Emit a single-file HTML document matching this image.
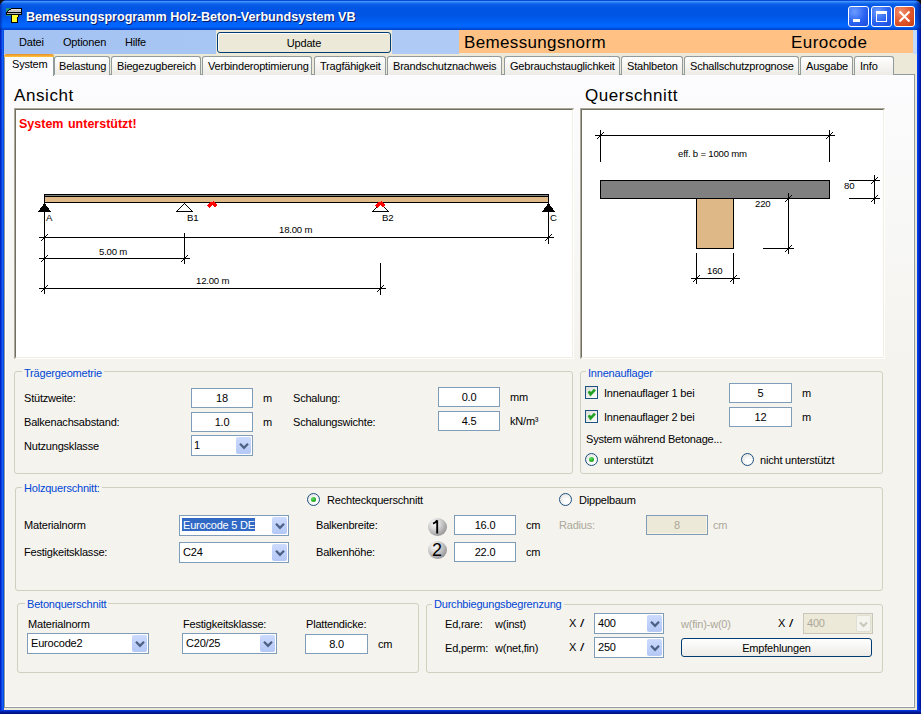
<!DOCTYPE html>
<html><head><meta charset="utf-8">
<style>
*{margin:0;padding:0;box-sizing:border-box}
html,body{width:921px;height:714px;overflow:hidden;background:#111}
body{position:relative;font-family:"Liberation Sans",sans-serif;font-size:11px;color:#000}
.a{position:absolute}
.t{position:absolute;line-height:11px;font-size:11px;white-space:nowrap;letter-spacing:-0.2px}
.grp{position:absolute;border:1px solid #D0D0BF;border-radius:3px}
.gt{position:absolute;line-height:11px;font-size:11px;white-space:nowrap;color:#0046D5;padding:0 2px;letter-spacing:-0.2px;background:#F4F3EE}
.tb{position:absolute;border:1px solid #7F9DB9;background:#fff;text-align:center;line-height:11px;font-size:11px;letter-spacing:-0.2px}
.cb{position:absolute;border:1px solid #7F9DB9;background:#fff}
.cbb{position:absolute;right:1px;top:1px;bottom:1px;width:15px;border-radius:2px;background:linear-gradient(#CCDAFD,#B4C8F6)}
.cbb svg{position:absolute;left:2.5px;top:5px}
.chk{position:absolute;width:13px;height:13px;border:1px solid #1C5180;background:linear-gradient(135deg,#DCDCD7,#fff)}
.rad{position:absolute;width:13px;height:13px;border-radius:50%;border:1px solid #1C5180;background:radial-gradient(circle at 60% 65%,#fff 20%,#DCDCD7 100%)}
.tab{position:absolute;top:56px;height:19px;border:1px solid #919B9C;border-bottom:none;border-radius:3px 3px 0 0;background:linear-gradient(#fff,#ECEBE6);line-height:11px;font-size:11px;letter-spacing:-0.2px;padding-top:4px;white-space:nowrap}
</style></head><body>
<div class="a" style="left:0;top:0;width:921px;height:714px;background:#0831d9;border-radius:7px 7px 0 0;overflow:hidden">
  <div class="a" style="left:0;top:0;width:921px;height:30px;background:linear-gradient(#0A48D8 0,#0A48D8 1px,#3D95FF 1px,#3D95FF 2px,#2A7CF5 2.5px,#0A60E8 4px,#0056E4 8px,#0054E3 15px,#005CF0 20px,#0066FF 25px,#0064FA 27px,#0050E0 28.5px,#0040C8 30px)"></div>
  <div class="a" style="left:0;top:0;width:3px;height:30px;background:linear-gradient(90deg,rgba(0,10,120,0.55),rgba(0,20,150,0.25) 50%,rgba(0,0,0,0))"></div>
  <div class="a" style="left:914px;top:0;width:7px;height:30px;background:linear-gradient(90deg,rgba(0,0,0,0),rgba(0,20,140,0.35) 50%,rgba(0,10,100,0.7))"></div>
  <div class="a" style="left:0;top:30px;width:4px;height:684px;background:linear-gradient(90deg,#0019B0,#0030D8 30%,#1464F4 60%,#0040E0)"></div>
  <div class="a" style="left:917px;top:30px;width:4px;height:684px;background:linear-gradient(90deg,#0046FF,#0030D0 40%,#001090)"></div>
  <div class="a" style="left:0;top:710px;width:921px;height:4px;background:linear-gradient(#0040F0,#001A9A 50%,#000E80)"></div>
</div>
<svg class="a" style="left:0;top:0" width="30" height="30" shape-rendering="crispEdges">
  <rect x="6" y="8" width="5" height="8" fill="#1E9080"/>
  <polygon points="11,8 22,8 22,15 6,15 6,12 7,12 7,11 8,11 8,10 9,10 9,9 11,9" fill="#000"/>
  <polygon points="11,9 21,9 21,12 8,12 8,11 9,11 9,10 11,10" fill="#C8C8C8"/>
  <rect x="11" y="9" width="10" height="1" fill="#E0E0E0"/>
  <rect x="7" y="13" width="14" height="1" fill="#B4B4B4"/>
  <rect x="11" y="15" width="8" height="2" fill="#000"/>
  <rect x="11" y="17" width="7" height="6" fill="#000"/>
  <rect x="12" y="15" width="6" height="2" fill="#FFFF30"/>
  <rect x="12" y="17" width="5" height="5" fill="#FFFF30"/>
</svg>
<div class="a" style="left:27px;top:12px;font-size:12.6px;font-weight:bold;color:#0a1a6a;line-height:13px;white-space:nowrap">Bemessungsprogramm Holz-Beton-Verbundsystem VB</div>
<div class="a" style="left:26px;top:11px;font-size:12.6px;font-weight:bold;color:#fff;line-height:13px;white-space:nowrap">Bemessungsprogramm Holz-Beton-Verbundsystem VB</div>
<div class="a" style="left:848px;top:6px;width:21px;height:21px;border:1px solid #fff;border-radius:3px;background:radial-gradient(circle at 30% 25%,#6c9cff,#2a63f2 55%,#1a4ad8)"></div>
<div class="a" style="left:853px;top:19px;width:7px;height:3px;background:#fff"></div>
<div class="a" style="left:871px;top:6px;width:21px;height:21px;border:1px solid #fff;border-radius:3px;background:radial-gradient(circle at 30% 25%,#6c9cff,#2a63f2 55%,#1a4ad8)"></div>
<div class="a" style="left:876px;top:11px;width:11px;height:11px;border:1px solid #fff;border-top-width:3px"></div>
<div class="a" style="left:894px;top:6px;width:21px;height:21px;border:1px solid #fff;border-radius:3px;background:radial-gradient(circle at 30% 25%,#f09070,#e0542a 55%,#c83c10)"></div>
<svg class="a" style="left:894px;top:6px" width="21" height="21"><path d="M5.5 5.5 L15.5 15.5 M15.5 5.5 L5.5 15.5" stroke="#fff" stroke-width="2"/></svg>
<div class="a" style="left:4px;top:30px;width:913px;height:680px;background:#ECE9D8"></div>
<div class="a" style="left:4px;top:30px;width:212px;height:24px;background:linear-gradient(90deg,#A4C2F2,#A8C6F3)"></div>
<div class="a" style="left:392px;top:30px;width:67px;height:24px;background:#AFCAF5"></div>
<div class="a" style="left:913px;top:30px;width:4px;height:24px;background:#C4DAFA"></div>
<div class="t" style="left:19px;top:37px;">Datei</div>
<div class="t" style="left:63px;top:37px;">Optionen</div>
<div class="t" style="left:125px;top:37px;">Hilfe</div>
<div class="a" style="left:217px;top:32px;width:174px;height:21px;border:1px solid #003C74;border-radius:3px;background:#ECE9D8;box-shadow:inset 1px 1px 0 #fff"></div>
<div class="t" style="left:217px;top:38px;width:174px;text-align:center">Update</div>
<div class="a" style="left:459px;top:30px;width:454px;height:23px;background:#FFC284"></div>
<div class="a" style="left:464px;top:34px;font-size:17px;line-height:17px;white-space:nowrap;letter-spacing:0.35px">Bemessungsnorm</div>
<div class="a" style="left:791px;top:34px;font-size:17px;line-height:17px;white-space:nowrap;letter-spacing:0.45px">Eurocode</div>
<div class="a" style="left:4px;top:74px;width:911px;height:634px;border:1px solid #919B9C;background:linear-gradient(#FCFCFE 0,#F8F8F7 140px,#F4F3EE 290px,#F4F3EE 100%)"></div>
<div class="a" style="left:5px;top:75px;width:1px;height:632px;background:#fff"></div>
<div class="a" style="left:913px;top:75px;width:1px;height:632px;background:#fff"></div>
<div class="a" style="left:5px;top:706px;width:909px;height:1px;background:#fff"></div>
<div class="tab" style="left:54px;width:56px;padding-left:4px">Belastung</div>
<div class="tab" style="left:111px;width:90px;padding-left:5px">Biegezugbereich</div>
<div class="tab" style="left:202px;width:110px;padding-left:5px">Verbinderoptimierung</div>
<div class="tab" style="left:314px;width:72px;padding-left:5px">Tragfähigkeit</div>
<div class="tab" style="left:387px;width:115px;padding-left:5px">Brandschutznachweis</div>
<div class="tab" style="left:504px;width:116px;padding-left:5px">Gebrauchstauglichkeit</div>
<div class="tab" style="left:621px;width:62px;padding-left:5px">Stahlbeton</div>
<div class="tab" style="left:684px;width:115px;padding-left:5px">Schallschutzprognose</div>
<div class="tab" style="left:800px;width:53px;padding-left:5px">Ausgabe</div>
<div class="tab" style="left:854px;width:40px;padding-left:5px">Info</div>
<div class="a" style="left:4px;top:54px;width:50px;height:22px;border:1px solid #919B9C;border-top:none;border-bottom:none;background:#FCFCFE;border-radius:3px 3px 0 0"></div>
<div class="a" style="left:5px;top:57px;width:1px;height:18px;background:#fff"></div>
<div class="a" style="left:4px;top:54px;width:50px;height:3px;background:linear-gradient(#E68B2C,#FFC73C);border-radius:3px 3px 0 0"></div>
<div class="t" style="left:12px;top:59px;">System</div>
<div class="a" style="left:14px;top:87px;font-size:17px;line-height:17px;white-space:nowrap;letter-spacing:0.6px">Ansicht</div>
<div class="a" style="left:585px;top:87px;font-size:17px;line-height:17px;white-space:nowrap;letter-spacing:0.55px">Querschnitt</div>
<div class="a" style="left:14px;top:108px;width:560px;height:251px;background:#fff;border-top:2px solid #ACA899;border-left:2px solid #ACA899;border-right:1px solid #fff;border-bottom:1px solid #fff"></div>
<div class="a" style="left:15px;top:109px;width:558px;height:249px;border-top:1px solid #716F64;border-left:1px solid #716F64;border-right:1px solid #F1EFE2;border-bottom:1px solid #F1EFE2"></div>
<div class="a" style="left:580px;top:108px;width:305px;height:251px;background:#fff;border-top:2px solid #ACA899;border-left:2px solid #ACA899;border-right:1px solid #fff;border-bottom:1px solid #fff"></div>
<div class="a" style="left:581px;top:109px;width:303px;height:249px;border-top:1px solid #716F64;border-left:1px solid #716F64;border-right:1px solid #F1EFE2;border-bottom:1px solid #F1EFE2"></div>
<div class="a" style="left:19px;top:118px;font-size:12.5px;font-weight:bold;color:#FF0000;line-height:12px;white-space:nowrap;word-spacing:1px">System unterstützt!</div>
<div class="grp" style="left:14px;top:371px;width:559px;height:103px"></div>
<div class="gt" style="left:22px;top:368px">Trägergeometrie</div>
<div class="t" style="left:24px;top:393px;">Stützweite:</div>
<div class="t" style="left:24px;top:417px;">Balkenachsabstand:</div>
<div class="t" style="left:24px;top:441px;">Nutzungsklasse</div>
<div class="tb" style="left:191px;top:388px;width:62px;height:20px;padding-top:4px;">18</div>
<div class="tb" style="left:191px;top:412px;width:62px;height:20px;padding-top:4px;">1.0</div>
<div class="cb" style="left:191px;top:435px;width:62px;height:21px"><div class="cbb"><svg width="11" height="8" viewBox="0 0 11 8"><path d="M1 1.8 L5 5.8 L9 1.8" fill="none" stroke="#4D6185" stroke-width="2.3"/></svg></div></div>
<div class="t" style="left:194px;top:440px;">1</div>
<div class="t" style="left:263px;top:393px;">m</div>
<div class="t" style="left:263px;top:417px;">m</div>
<div class="t" style="left:293px;top:393px;">Schalung:</div>
<div class="t" style="left:293px;top:417px;">Schalungswichte:</div>
<div class="tb" style="left:438px;top:387px;width:62px;height:20px;padding-top:4px;">0.0</div>
<div class="tb" style="left:438px;top:411px;width:62px;height:20px;padding-top:4px;">4.5</div>
<div class="t" style="left:510px;top:392px;">mm</div>
<div class="t" style="left:510px;top:416px;">kN/m³</div>
<div class="grp" style="left:580px;top:371px;width:303px;height:103px"></div>
<div class="gt" style="left:586px;top:368px">Innenauflager</div>
<div class="chk" style="left:585px;top:386px"><svg class="a" style="left:1px;top:1px" width="11" height="11" viewBox="0 0 11 11"><path d="M1.8 3.3 L3.6 6.3 L7.9 1.7" fill="none" stroke="#21A121" stroke-width="2.7"/></svg></div>
<div class="chk" style="left:585px;top:410px"><svg class="a" style="left:1px;top:1px" width="11" height="11" viewBox="0 0 11 11"><path d="M1.8 3.3 L3.6 6.3 L7.9 1.7" fill="none" stroke="#21A121" stroke-width="2.7"/></svg></div>
<div class="t" style="left:604px;top:388px;">Innenauflager 1 bei</div>
<div class="t" style="left:604px;top:412px;">Innenauflager 2 bei</div>
<div class="tb" style="left:729px;top:383px;width:63px;height:20px;padding-top:4px;">5</div>
<div class="tb" style="left:729px;top:407px;width:63px;height:20px;padding-top:4px;">12</div>
<div class="t" style="left:802px;top:388px;">m</div>
<div class="t" style="left:802px;top:412px;">m</div>
<div class="t" style="left:586px;top:434px;">System während Betonage...</div>
<div class="rad" style="left:585px;top:453px"><div class="a" style="left:3px;top:3px;width:5px;height:5px;border-radius:50%;background:radial-gradient(circle at 35% 30%,#5AE05A,#139A13 80%)"></div></div>
<div class="t" style="left:604px;top:455px;">unterstützt</div>
<div class="rad" style="left:741px;top:453px"></div>
<div class="t" style="left:760px;top:455px;">nicht unterstützt</div>
<div class="grp" style="left:15px;top:487px;width:868px;height:104px"></div>
<div class="gt" style="left:22px;top:483px">Holzquerschnitt:</div>
<div class="t" style="left:24px;top:520px;">Materialnorm</div>
<div class="t" style="left:24px;top:547px;">Festigkeitsklasse:</div>
<div class="cb" style="left:179px;top:515px;width:110px;height:21px"><div class="cbb"><svg width="11" height="8" viewBox="0 0 11 8"><path d="M1 1.8 L5 5.8 L9 1.8" fill="none" stroke="#4D6185" stroke-width="2.3"/></svg></div></div>
<div class="a" style="left:182px;top:518px;width:73px;height:13px;background:#316AC5"></div>
<div class="t" style="left:183px;top:520px;color:#fff">Eurocode 5 DE</div>
<div class="cb" style="left:179px;top:542px;width:110px;height:21px"><div class="cbb"><svg width="11" height="8" viewBox="0 0 11 8"><path d="M1 1.8 L5 5.8 L9 1.8" fill="none" stroke="#4D6185" stroke-width="2.3"/></svg></div></div>
<div class="t" style="left:183px;top:547px;">C24</div>
<div class="rad" style="left:307px;top:493px"><div class="a" style="left:3px;top:3px;width:5px;height:5px;border-radius:50%;background:radial-gradient(circle at 35% 30%,#5AE05A,#139A13 80%)"></div></div>
<div class="t" style="left:327px;top:495px;">Rechteckquerschnitt</div>
<div class="rad" style="left:559px;top:493px"></div>
<div class="t" style="left:579px;top:495px;">Dippelbaum</div>
<div class="t" style="left:316px;top:520px;">Balkenbreite:</div>
<div class="t" style="left:316px;top:547px;">Balkenhöhe:</div>
<div class="tb" style="left:454px;top:515px;width:62px;height:20px;padding-top:4px;">16.0</div>
<div class="tb" style="left:454px;top:542px;width:62px;height:20px;padding-top:4px;">22.0</div>
<div class="t" style="left:526px;top:520px;">cm</div>
<div class="t" style="left:526px;top:547px;">cm</div>
<div class="t" style="left:559px;top:520px;color:#ACA899">Radius:</div>
<div class="tb" style="left:646px;top:515px;width:62px;height:20px;padding-top:4px;background:#ECE9D8;color:#ACA899;border-color:#7F9DB9;box-shadow:inset -1px -1px 0 #F8F4E4">8</div>
<div class="t" style="left:713px;top:520px;color:#ACA899">cm</div>
<div class="a" style="left:428px;top:518px;width:19px;height:18px;border-radius:50%;background:radial-gradient(circle at 35% 30%,#FCFCFC 0,#DADADA 30%,#A0A0A0 70%,#5E5E5E 100%)"></div>
<svg class="a" style="left:428px;top:518px" width="19" height="18"><path d="M9.2 2.2 L9.2 15.5 M5 5.6 Q8 4.5 9.2 2.2" fill="none" stroke="#000" stroke-width="1.9"/></svg>
<div class="a" style="left:428px;top:541px;width:19px;height:18px;border-radius:50%;background:radial-gradient(circle at 35% 30%,#FCFCFC 0,#DADADA 30%,#A0A0A0 70%,#5E5E5E 100%)"></div>
<div class="a" style="left:428px;top:541px;width:18px;text-align:center;font-size:18px;line-height:18px">2</div>
<div class="grp" style="left:17px;top:603px;width:402px;height:70px"></div>
<div class="gt" style="left:25px;top:599px">Betonquerschnitt</div>
<div class="t" style="left:28px;top:619px;">Materialnorm</div>
<div class="t" style="left:183px;top:619px;">Festigkeitsklasse:</div>
<div class="t" style="left:306px;top:619px;">Plattendicke:</div>
<div class="cb" style="left:27px;top:633px;width:122px;height:21px"><div class="cbb"><svg width="11" height="8" viewBox="0 0 11 8"><path d="M1 1.8 L5 5.8 L9 1.8" fill="none" stroke="#4D6185" stroke-width="2.3"/></svg></div></div>
<div class="t" style="left:31px;top:638px;">Eurocode2</div>
<div class="cb" style="left:182px;top:633px;width:95px;height:21px"><div class="cbb"><svg width="11" height="8" viewBox="0 0 11 8"><path d="M1 1.8 L5 5.8 L9 1.8" fill="none" stroke="#4D6185" stroke-width="2.3"/></svg></div></div>
<div class="t" style="left:186px;top:638px;">C20/25</div>
<div class="tb" style="left:305px;top:634px;width:63px;height:20px;padding-top:4px;">8.0</div>
<div class="t" style="left:378px;top:639px;">cm</div>
<div class="grp" style="left:426px;top:604px;width:457px;height:69px"></div>
<div class="gt" style="left:432px;top:599px">Durchbiegungsbegrenzung</div>
<div class="t" style="left:445px;top:619px;">Ed,rare:</div>
<div class="t" style="left:495px;top:619px;">w(inst)</div>
<div class="t" style="left:569px;top:618px;">X</div>
<div class="t" style="left:580px;top:618px;transform:scaleX(1.4);transform-origin:0 0">/</div>
<div class="t" style="left:445px;top:643px;">Ed,perm:</div>
<div class="t" style="left:495px;top:643px;">w(net,fin)</div>
<div class="t" style="left:569px;top:642px;">X</div>
<div class="t" style="left:580px;top:642px;transform:scaleX(1.4);transform-origin:0 0">/</div>
<div class="cb" style="left:594px;top:613px;width:70px;height:21px"><div class="cbb"><svg width="11" height="8" viewBox="0 0 11 8"><path d="M1 1.8 L5 5.8 L9 1.8" fill="none" stroke="#4D6185" stroke-width="2.3"/></svg></div></div>
<div class="t" style="left:598px;top:618px;">400</div>
<div class="cb" style="left:594px;top:637px;width:70px;height:21px"><div class="cbb"><svg width="11" height="8" viewBox="0 0 11 8"><path d="M1 1.8 L5 5.8 L9 1.8" fill="none" stroke="#4D6185" stroke-width="2.3"/></svg></div></div>
<div class="t" style="left:598px;top:642px;">250</div>
<div class="t" style="left:681px;top:619px;color:#ACA899">w(fin)-w(0)</div>
<div class="t" style="left:778px;top:618px;">X</div>
<div class="t" style="left:789px;top:618px;transform:scaleX(1.4);transform-origin:0 0">/</div>
<div class="a" style="left:803px;top:613px;width:70px;height:21px;border:1px solid #C9C7BA;background:#ECE9D8"><div class="a" style="right:1px;top:1px;bottom:1px;width:15px;border-radius:2px;background:#F4F3EE;border:1px solid #E0DFD6"><svg class="a" style="left:2px;top:5px" width="9" height="7" viewBox="0 0 9 7"><path d="M1 1.5 L4.5 5 L8 1.5" fill="none" stroke="#C9C7BA" stroke-width="2"/></svg></div></div>
<div class="t" style="left:807px;top:618px;color:#ACA899">400</div>
<div class="a" style="left:681px;top:638px;width:191px;height:19px;border:1px solid #003C74;border-radius:3px;background:linear-gradient(#fff,#ECEBE6)"></div>
<div class="t" style="left:681px;top:643px;width:191px;text-align:center">Empfehlungen</div>
<svg class="a" style="left:0;top:0" width="921" height="714" shape-rendering="crispEdges"><rect x="44" y="194" width="505" height="9" fill="#DEB887"/><rect x="44" y="194" width="505" height="1" fill="#000"/><rect x="45" y="195" width="503" height="1" fill="#808080"/><rect x="44" y="196" width="505" height="1" fill="#000"/><rect x="44" y="202" width="505" height="1" fill="#000"/><rect x="44" y="194" width="1" height="9" fill="#000"/><rect x="548" y="194" width="1" height="9" fill="#000"/><polygon points="44.5,203 51,211.8 38,211.8" fill="#000"/><polygon points="548.5,203 555,211.8 542,211.8" fill="#000"/><polygon points="184.5,203.5 192.5,211.5 176.5,211.5" fill="none" stroke="#000" stroke-width="1"/><polygon points="380.5,203.5 388.5,211.5 372.5,211.5" fill="none" stroke="#000" stroke-width="1"/><rect x="44" y="212" width="1" height="82" fill="#000"/><rect x="548" y="212" width="1" height="32" fill="#000"/><rect x="184" y="233" width="1" height="31" fill="#000"/><rect x="380" y="263" width="1" height="32" fill="#000"/><rect x="39" y="237" width="515" height="1" fill="#000"/><rect x="39" y="258" width="151" height="1" fill="#000"/><rect x="39" y="288" width="347" height="1" fill="#000"/><rect x="41" y="240" width="1" height="1" fill="#000"/><rect x="42" y="239" width="1" height="1" fill="#000"/><rect x="43" y="238" width="1" height="1" fill="#000"/><rect x="44" y="237" width="1" height="1" fill="#000"/><rect x="45" y="236" width="1" height="1" fill="#000"/><rect x="46" y="235" width="1" height="1" fill="#000"/><rect x="47" y="234" width="1" height="1" fill="#000"/><rect x="545" y="240" width="1" height="1" fill="#000"/><rect x="546" y="239" width="1" height="1" fill="#000"/><rect x="547" y="238" width="1" height="1" fill="#000"/><rect x="548" y="237" width="1" height="1" fill="#000"/><rect x="549" y="236" width="1" height="1" fill="#000"/><rect x="550" y="235" width="1" height="1" fill="#000"/><rect x="551" y="234" width="1" height="1" fill="#000"/><rect x="41" y="261" width="1" height="1" fill="#000"/><rect x="42" y="260" width="1" height="1" fill="#000"/><rect x="43" y="259" width="1" height="1" fill="#000"/><rect x="44" y="258" width="1" height="1" fill="#000"/><rect x="45" y="257" width="1" height="1" fill="#000"/><rect x="46" y="256" width="1" height="1" fill="#000"/><rect x="47" y="255" width="1" height="1" fill="#000"/><rect x="181" y="261" width="1" height="1" fill="#000"/><rect x="182" y="260" width="1" height="1" fill="#000"/><rect x="183" y="259" width="1" height="1" fill="#000"/><rect x="184" y="258" width="1" height="1" fill="#000"/><rect x="185" y="257" width="1" height="1" fill="#000"/><rect x="186" y="256" width="1" height="1" fill="#000"/><rect x="187" y="255" width="1" height="1" fill="#000"/><rect x="41" y="291" width="1" height="1" fill="#000"/><rect x="42" y="290" width="1" height="1" fill="#000"/><rect x="43" y="289" width="1" height="1" fill="#000"/><rect x="44" y="288" width="1" height="1" fill="#000"/><rect x="45" y="287" width="1" height="1" fill="#000"/><rect x="46" y="286" width="1" height="1" fill="#000"/><rect x="47" y="285" width="1" height="1" fill="#000"/><rect x="377" y="291" width="1" height="1" fill="#000"/><rect x="378" y="290" width="1" height="1" fill="#000"/><rect x="379" y="289" width="1" height="1" fill="#000"/><rect x="380" y="288" width="1" height="1" fill="#000"/><rect x="381" y="287" width="1" height="1" fill="#000"/><rect x="382" y="286" width="1" height="1" fill="#000"/><rect x="383" y="285" width="1" height="1" fill="#000"/><text x="46" y="221" font-family="Liberation Sans" font-size="9.6" letter-spacing="-0.2">A</text><text x="187" y="221" font-family="Liberation Sans" font-size="9.6" letter-spacing="-0.2">B1</text><text x="382" y="221" font-family="Liberation Sans" font-size="9.6" letter-spacing="-0.2">B2</text><text x="550" y="221" font-family="Liberation Sans" font-size="9.6" letter-spacing="-0.2">C</text><text x="279" y="233" font-family="Liberation Sans" font-size="9.6" letter-spacing="-0.2">18.00 m</text><text x="99" y="255" font-family="Liberation Sans" font-size="9.6" letter-spacing="-0.2">5.00 m</text><text x="196" y="284" font-family="Liberation Sans" font-size="9.6" letter-spacing="-0.2">12.00 m</text><rect x="213" y="201" width="1" height="1" fill="#FF0000"/><rect x="210" y="202" width="5" height="1" fill="#FF0000"/><rect x="209" y="203" width="7" height="1" fill="#FF0000"/><rect x="208" y="204" width="9" height="1" fill="#FF0000"/><rect x="207" y="205" width="5" height="1" fill="#FF0000"/><rect x="213" y="205" width="4" height="1" fill="#FF0000"/><rect x="208" y="206" width="3" height="1" fill="#FF0000"/><rect x="214" y="206" width="2" height="1" fill="#FF0000"/><rect x="209" y="207" width="1" height="1" fill="#FF0000"/><rect x="381" y="201" width="1" height="1" fill="#FF0000"/><rect x="378" y="202" width="5" height="1" fill="#FF0000"/><rect x="377" y="203" width="7" height="1" fill="#FF0000"/><rect x="376" y="204" width="9" height="1" fill="#FF0000"/><rect x="375" y="205" width="5" height="1" fill="#FF0000"/><rect x="381" y="205" width="4" height="1" fill="#FF0000"/><rect x="376" y="206" width="3" height="1" fill="#FF0000"/><rect x="382" y="206" width="2" height="1" fill="#FF0000"/><rect x="377" y="207" width="1" height="1" fill="#FF0000"/><rect x="595" y="135" width="240" height="1" fill="#000"/><rect x="600" y="130" width="1" height="32" fill="#000"/><rect x="829" y="130" width="1" height="32" fill="#000"/><rect x="597" y="138" width="1" height="1" fill="#000"/><rect x="598" y="137" width="1" height="1" fill="#000"/><rect x="599" y="136" width="1" height="1" fill="#000"/><rect x="600" y="135" width="1" height="1" fill="#000"/><rect x="601" y="134" width="1" height="1" fill="#000"/><rect x="602" y="133" width="1" height="1" fill="#000"/><rect x="603" y="132" width="1" height="1" fill="#000"/><rect x="826" y="138" width="1" height="1" fill="#000"/><rect x="827" y="137" width="1" height="1" fill="#000"/><rect x="828" y="136" width="1" height="1" fill="#000"/><rect x="829" y="135" width="1" height="1" fill="#000"/><rect x="830" y="134" width="1" height="1" fill="#000"/><rect x="831" y="133" width="1" height="1" fill="#000"/><rect x="832" y="132" width="1" height="1" fill="#000"/><text x="678" y="157" font-family="Liberation Sans" font-size="9.6" letter-spacing="-0.2">eff. b = 1000 mm</text><rect x="600" y="180" width="230" height="19" fill="#808080"/><rect x="600" y="180" width="230" height="1" fill="#000"/><rect x="600" y="198" width="230" height="1" fill="#000"/><rect x="600" y="180" width="1" height="19" fill="#000"/><rect x="829" y="180" width="1" height="19" fill="#000"/><rect x="696" y="199" width="38" height="50" fill="#DEB887"/><rect x="696" y="248" width="38" height="1" fill="#000"/><rect x="696" y="198" width="1" height="51" fill="#000"/><rect x="733" y="198" width="1" height="51" fill="#000"/><rect x="696" y="253" width="1" height="31" fill="#000"/><rect x="733" y="253" width="1" height="31" fill="#000"/><rect x="691" y="278" width="49" height="1" fill="#000"/><rect x="693" y="281" width="1" height="1" fill="#000"/><rect x="694" y="280" width="1" height="1" fill="#000"/><rect x="695" y="279" width="1" height="1" fill="#000"/><rect x="696" y="278" width="1" height="1" fill="#000"/><rect x="697" y="277" width="1" height="1" fill="#000"/><rect x="698" y="276" width="1" height="1" fill="#000"/><rect x="699" y="275" width="1" height="1" fill="#000"/><rect x="730" y="281" width="1" height="1" fill="#000"/><rect x="731" y="280" width="1" height="1" fill="#000"/><rect x="732" y="279" width="1" height="1" fill="#000"/><rect x="733" y="278" width="1" height="1" fill="#000"/><rect x="734" y="277" width="1" height="1" fill="#000"/><rect x="735" y="276" width="1" height="1" fill="#000"/><rect x="736" y="275" width="1" height="1" fill="#000"/><text x="707" y="274" font-family="Liberation Sans" font-size="9.6" letter-spacing="-0.2">160</text><rect x="788" y="193" width="1" height="61" fill="#000"/><rect x="763" y="248" width="31" height="1" fill="#000"/><rect x="785" y="201" width="1" height="1" fill="#000"/><rect x="786" y="200" width="1" height="1" fill="#000"/><rect x="787" y="199" width="1" height="1" fill="#000"/><rect x="788" y="198" width="1" height="1" fill="#000"/><rect x="789" y="197" width="1" height="1" fill="#000"/><rect x="790" y="196" width="1" height="1" fill="#000"/><rect x="791" y="195" width="1" height="1" fill="#000"/><rect x="785" y="251" width="1" height="1" fill="#000"/><rect x="786" y="250" width="1" height="1" fill="#000"/><rect x="787" y="249" width="1" height="1" fill="#000"/><rect x="788" y="248" width="1" height="1" fill="#000"/><rect x="789" y="247" width="1" height="1" fill="#000"/><rect x="790" y="246" width="1" height="1" fill="#000"/><rect x="791" y="245" width="1" height="1" fill="#000"/><text x="755" y="207" font-family="Liberation Sans" font-size="9.6" letter-spacing="-0.2">220</text><rect x="874" y="175" width="1" height="29" fill="#000"/><rect x="849" y="180" width="31" height="1" fill="#000"/><rect x="849" y="198" width="31" height="1" fill="#000"/><rect x="871" y="183" width="1" height="1" fill="#000"/><rect x="872" y="182" width="1" height="1" fill="#000"/><rect x="873" y="181" width="1" height="1" fill="#000"/><rect x="874" y="180" width="1" height="1" fill="#000"/><rect x="875" y="179" width="1" height="1" fill="#000"/><rect x="876" y="178" width="1" height="1" fill="#000"/><rect x="877" y="177" width="1" height="1" fill="#000"/><rect x="871" y="201" width="1" height="1" fill="#000"/><rect x="872" y="200" width="1" height="1" fill="#000"/><rect x="873" y="199" width="1" height="1" fill="#000"/><rect x="874" y="198" width="1" height="1" fill="#000"/><rect x="875" y="197" width="1" height="1" fill="#000"/><rect x="876" y="196" width="1" height="1" fill="#000"/><rect x="877" y="195" width="1" height="1" fill="#000"/><text x="844" y="189" font-family="Liberation Sans" font-size="9.6" letter-spacing="-0.2">80</text></svg>
</body></html>
